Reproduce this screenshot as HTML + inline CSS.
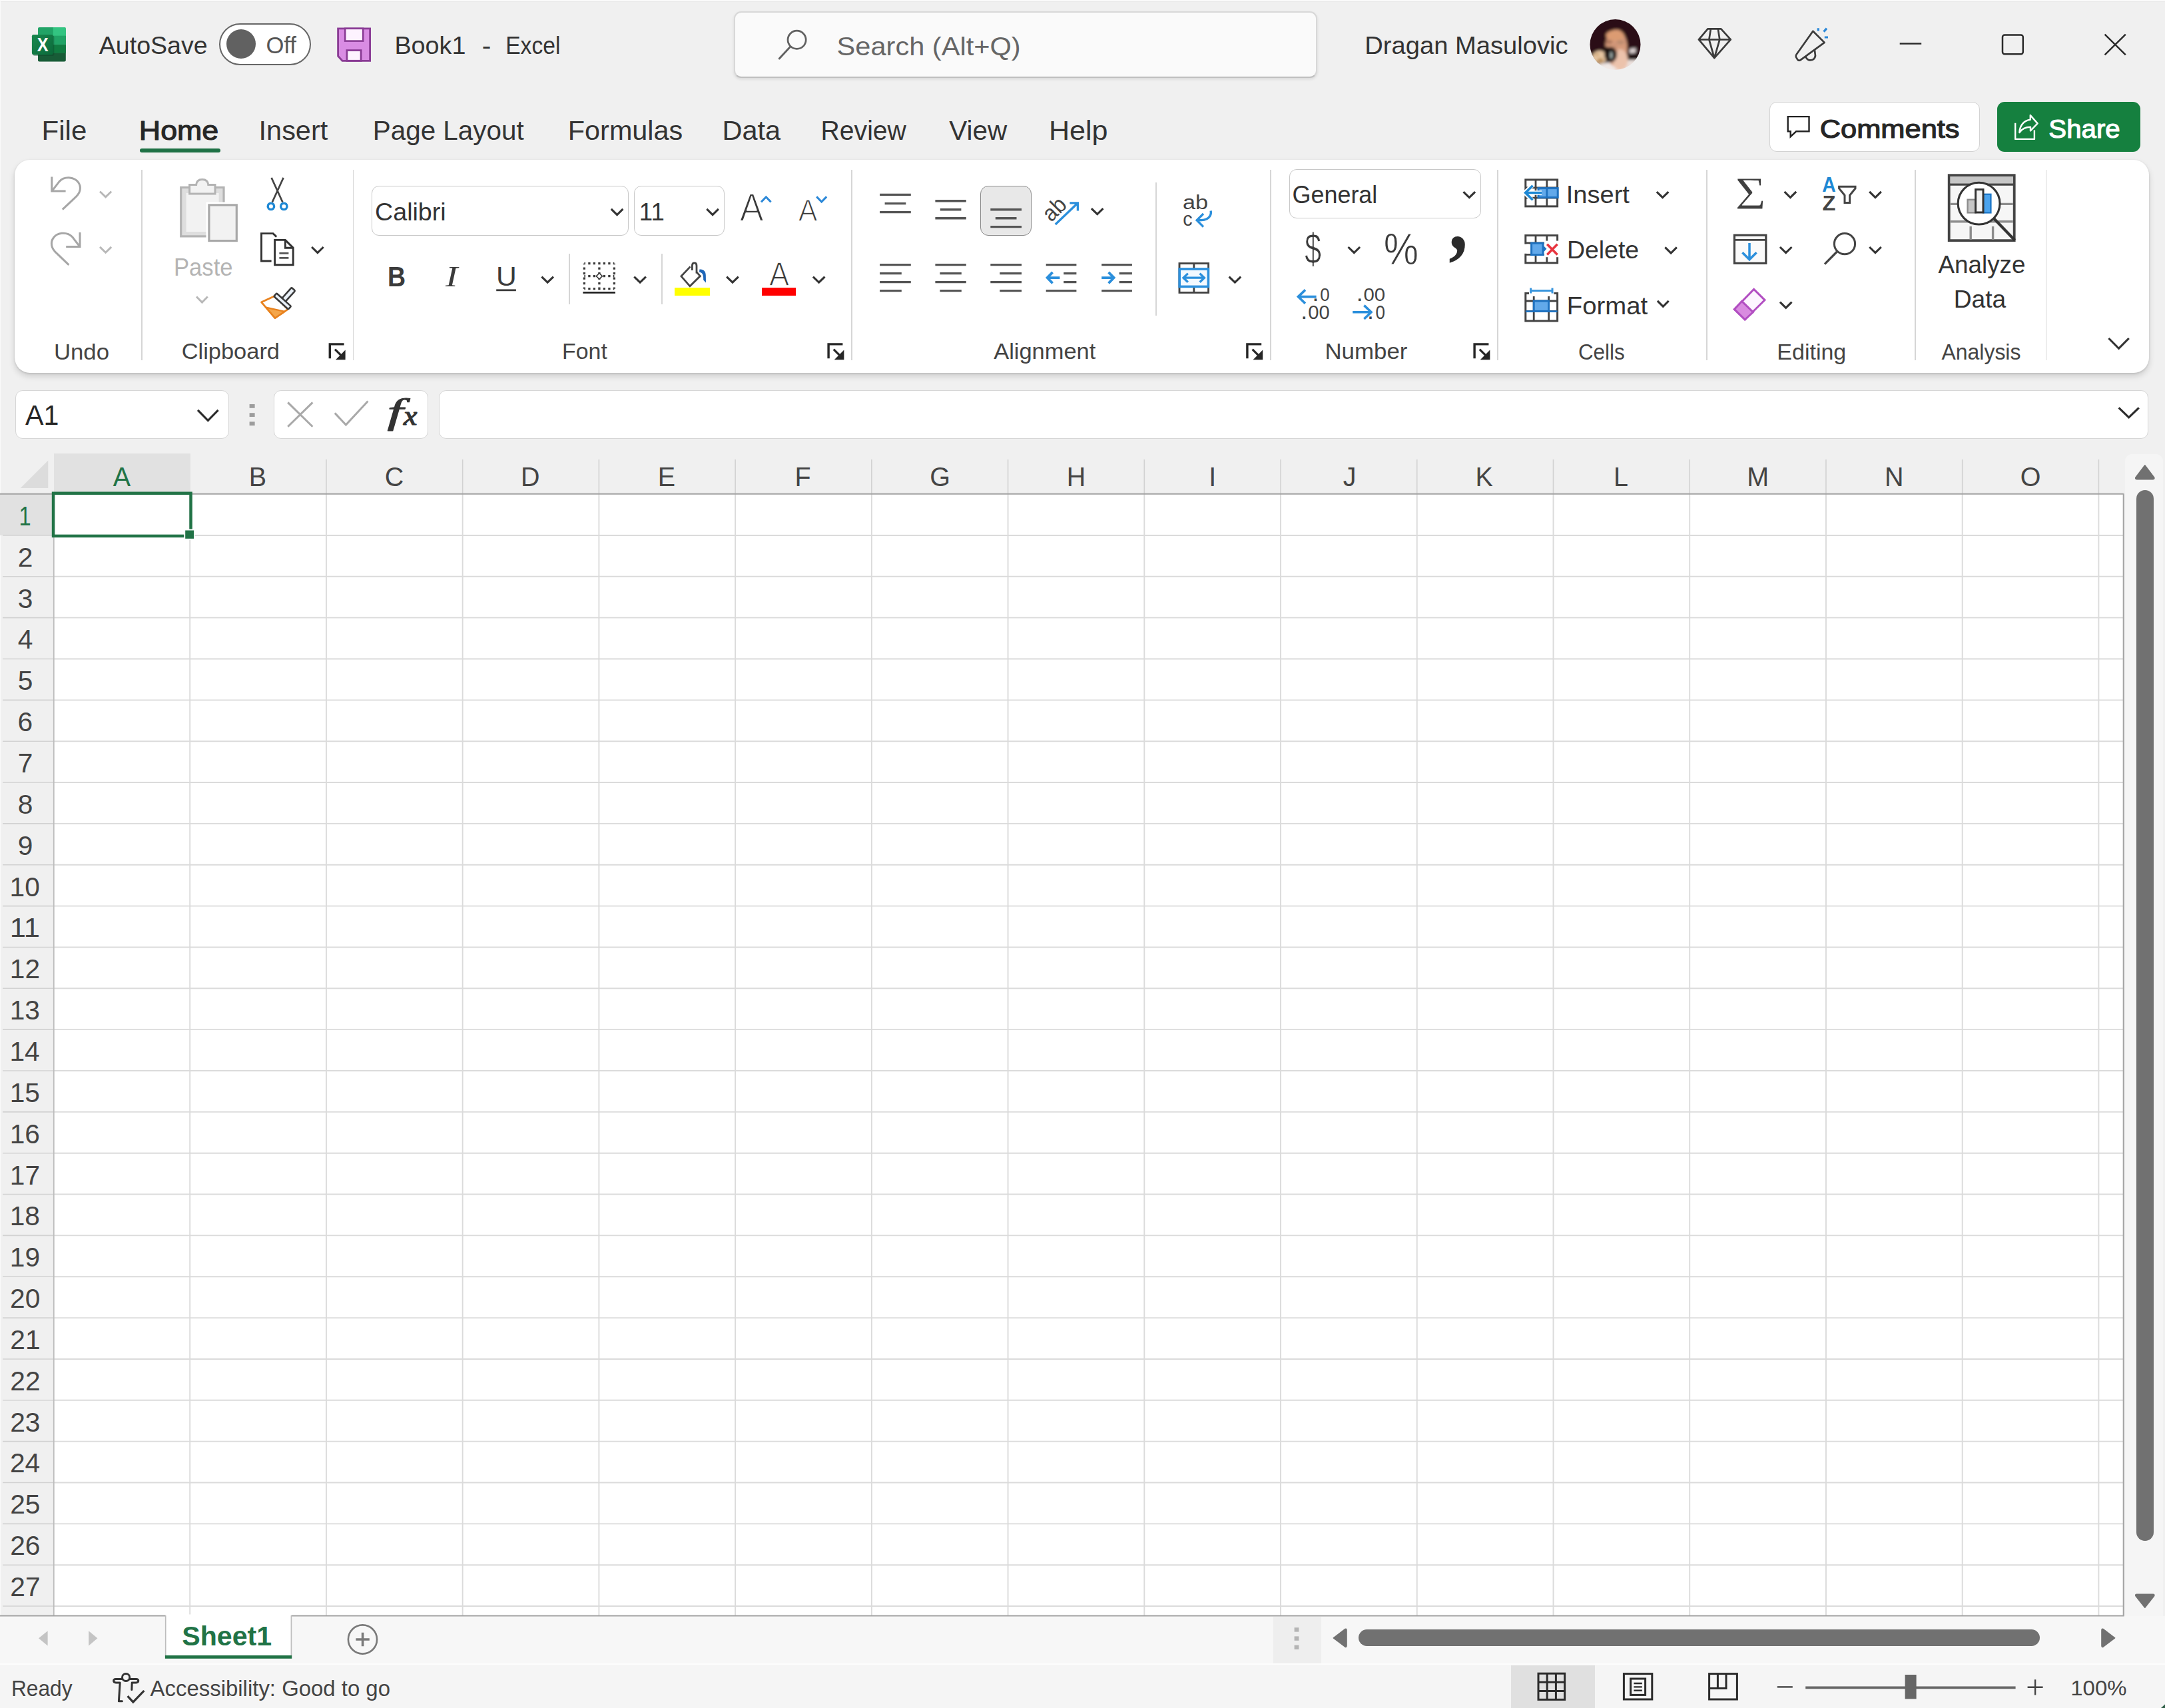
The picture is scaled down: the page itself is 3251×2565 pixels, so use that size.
<!DOCTYPE html>
<html lang="en"><head><meta charset="utf-8"><title>Book1 - Excel</title>
<style>
html,body{margin:0;padding:0;}
body{width:3251px;height:2565px;overflow:hidden;background:#f0f0f0;position:relative;font-family:'Liberation Sans',sans-serif;}
.a{position:absolute;box-sizing:border-box;}
svg.ov{position:absolute;left:0;top:0;width:3251px;height:2565px;font-family:'Liberation Sans',sans-serif;}

</style></head><body>
<div class="a" style="left:0;top:0;width:3251px;height:240px;background:#f0f0f0"></div>
<div class="a" style="left:0;top:0;width:3251px;height:1.3px;background:#fff"></div>
<div class="a" style="left:0;top:1.3px;width:3251px;height:2px;background:#ececec"></div>
<div class="a" style="left:0;top:0;width:1.2px;height:2565px;background:#fafafa"></div>
<div class="a" style="left:1102.4px;top:17.0px;width:875.6px;height:100.2px;background:#fafafa;border:2px solid #d8d8d8;border-bottom:2.4px solid #bfbfbf;border-radius:11px;box-shadow:0 2px 4px rgba(0,0,0,.10)"></div>
<div class="a" style="left:329.3px;top:35.4px;width:137.9px;height:62.6px;background:#fff;border:2.5px solid #666;border-radius:32px"></div>
<div class="a" style="left:339.7px;top:43.7px;width:44.5px;height:44.6px;background:#616161;border-radius:50%"></div>
<div class="a" style="left:210.3px;top:222.7px;width:120.9px;height:6.5px;background:#1e7145;border-radius:3.2px"></div>
<div class="a" style="left:2656.6px;top:152.7px;width:316.0px;height:75.5px;background:#fff;border:1.5px solid #d2d2d2;border-radius:11px"></div>
<div class="a" style="left:2999.1px;top:152.7px;width:215.3px;height:75.5px;background:#15803f;border-radius:11px"></div>
<div class="a" style="left:22.0px;top:240.0px;width:3205.3px;height:320.2px;background:#fff;border-radius:23px;box-shadow:0 5px 10px rgba(0,0,0,.15),0 1px 3px rgba(0,0,0,.13)"></div>
<div class="a" style="left:212.0px;top:255.0px;width:1.6px;height:285.5px;background:#d6d6d6"></div>
<div class="a" style="left:529.8px;top:255.0px;width:1.6px;height:285.5px;background:#d6d6d6"></div>
<div class="a" style="left:1278.4px;top:255.0px;width:1.6px;height:285.5px;background:#d6d6d6"></div>
<div class="a" style="left:1907.3px;top:255.0px;width:1.6px;height:285.5px;background:#d6d6d6"></div>
<div class="a" style="left:2248.4px;top:255.0px;width:1.6px;height:285.5px;background:#d6d6d6"></div>
<div class="a" style="left:2562.3px;top:255.0px;width:1.6px;height:285.5px;background:#d6d6d6"></div>
<div class="a" style="left:2875.3px;top:255.0px;width:1.6px;height:285.5px;background:#d6d6d6"></div>
<div class="a" style="left:3071.9px;top:255.0px;width:1.6px;height:285.5px;background:#d6d6d6"></div>
<div class="a" style="left:853.7px;top:381.0px;width:2.0px;height:76.0px;background:#d6d6d6"></div>
<div class="a" style="left:992.5px;top:381.0px;width:2.0px;height:76.0px;background:#d6d6d6"></div>
<div class="a" style="left:1735.0px;top:273.7px;width:2.0px;height:200.7px;background:#d6d6d6"></div>
<div class="a" style="left:557.9px;top:278.6px;width:386.1px;height:75.4px;background:#fff;border:1.5px solid #c8c8c8;border-radius:11px"></div>
<div class="a" style="left:952.4px;top:278.6px;width:135.2px;height:75.4px;background:#fff;border:1.5px solid #c8c8c8;border-radius:11px"></div>
<div class="a" style="left:1936.1px;top:253.7px;width:287.6px;height:74.8px;background:#fff;border:1.5px solid #c8c8c8;border-radius:11px"></div>
<div class="a" style="left:1472.3px;top:278.6px;width:76.6px;height:75.4px;background:#e8e8e8;border:1.5px solid #8c8c8c;border-radius:12px"></div>
<div class="a" style="left:23.3px;top:585.9px;width:320.9px;height:72.9px;background:#fff;border:1.8px solid #d6d6d6;border-radius:11px"></div>
<div class="a" style="left:411.4px;top:585.9px;width:232.1px;height:72.9px;background:#fff;border:1.8px solid #d6d6d6;border-radius:11px"></div>
<div class="a" style="left:658.5px;top:585.9px;width:2567.5px;height:73.1px;background:#fff;border:1.8px solid #d6d6d6;border-radius:11px"></div>
<div class="a" style="left:80.8px;top:741.3px;width:3107.9px;height:1685.2px;background:#fff"></div>
<div class="a" style="left:80.8px;top:681.3px;width:205.4px;height:60.0px;background:#e1e1e1"></div>
<div class="a" style="left:0.0px;top:741.3px;width:80.8px;height:62.7px;background:#e1e1e1"></div>
<div class="a" style="left:3191.0px;top:682.0px;width:57.0px;height:1746.0px;background:#f5f5f5;border-radius:10px 10px 0 0"></div>
<div class="a" style="left:3208.0px;top:736.0px;width:25.8px;height:1577.7px;background:#717171;border-radius:13px"></div>
<div class="a" style="left:0.0px;top:2426.5px;width:3251.0px;height:71.5px;background:#f7f7f7"></div>
<div class="a" style="left:1912.0px;top:2427.5px;width:72.3px;height:70.0px;background:#eeeeee"></div>
<div class="a" style="left:2039.6px;top:2446.9px;width:1023.1px;height:25.4px;background:#717171;border-radius:13px"></div>
<div class="a" style="left:0.0px;top:2498.0px;width:3251.0px;height:67.0px;background:#f5f5f5;border-top:2.4px solid #fdfdfd"></div>
<div class="a" style="left:2269.1px;top:2501.0px;width:126.3px;height:64.0px;background:#e0e0e0"></div>
<svg class="ov" viewBox="0 0 3251 2565" width="3251" height="2565">
<path d="M285.20 741.3 V2426.5 M489.93 741.3 V2426.5 M694.66 741.3 V2426.5 M899.39 741.3 V2426.5 M1104.12 741.3 V2426.5 M1308.85 741.3 V2426.5 M1513.58 741.3 V2426.5 M1718.31 741.3 V2426.5 M1923.04 741.3 V2426.5 M2127.77 741.3 V2426.5 M2332.50 741.3 V2426.5 M2537.23 741.3 V2426.5 M2741.96 741.3 V2426.5 M2946.69 741.3 V2426.5 M3151.42 741.3 V2426.5 M80.8 803.95 H3188.7 M80.8 865.80 H3188.7 M80.8 927.65 H3188.7 M80.8 989.50 H3188.7 M80.8 1051.35 H3188.7 M80.8 1113.20 H3188.7 M80.8 1175.05 H3188.7 M80.8 1236.90 H3188.7 M80.8 1298.75 H3188.7 M80.8 1360.60 H3188.7 M80.8 1422.45 H3188.7 M80.8 1484.30 H3188.7 M80.8 1546.15 H3188.7 M80.8 1608.00 H3188.7 M80.8 1669.85 H3188.7 M80.8 1731.70 H3188.7 M80.8 1793.55 H3188.7 M80.8 1855.40 H3188.7 M80.8 1917.25 H3188.7 M80.8 1979.10 H3188.7 M80.8 2040.95 H3188.7 M80.8 2102.80 H3188.7 M80.8 2164.65 H3188.7 M80.8 2226.50 H3188.7 M80.8 2288.35 H3188.7 M80.8 2350.20 H3188.7 M80.8 2412.05 H3188.7 " stroke="#dbdbdb" stroke-width="1.9" fill="none"/>
<path d="M489.93 690 V741.3 M694.66 690 V741.3 M899.39 690 V741.3 M1104.12 690 V741.3 M1308.85 690 V741.3 M1513.58 690 V741.3 M1718.31 690 V741.3 M1923.04 690 V741.3 M2127.77 690 V741.3 M2332.50 690 V741.3 M2537.23 690 V741.3 M2741.96 690 V741.3 M2946.69 690 V741.3 M3151.42 690 V741.3 M4 803.95 H80.8 M4 865.80 H80.8 M4 927.65 H80.8 M4 989.50 H80.8 M4 1051.35 H80.8 M4 1113.20 H80.8 M4 1175.05 H80.8 M4 1236.90 H80.8 M4 1298.75 H80.8 M4 1360.60 H80.8 M4 1422.45 H80.8 M4 1484.30 H80.8 M4 1546.15 H80.8 M4 1608.00 H80.8 M4 1669.85 H80.8 M4 1731.70 H80.8 M4 1793.55 H80.8 M4 1855.40 H80.8 M4 1917.25 H80.8 M4 1979.10 H80.8 M4 2040.95 H80.8 M4 2102.80 H80.8 M4 2164.65 H80.8 M4 2226.50 H80.8 M4 2288.35 H80.8 M4 2350.20 H80.8 M4 2412.05 H80.8 " stroke="#d2d2d2" stroke-width="1.6" fill="none"/>
<path d="M72.3 691.6 V732.9 H30.8 Z" fill="#dcdcdc"/>
<path d="M80.8 741.3 V2426.5" stroke="#bdbdbd" stroke-width="1.8" fill="none"/>
<path d="M0 741.6999999999999 H3188.7 M3188.7 741.3 V2426.5 M0 2426.5 H3189.6" stroke="#a3a3a3" stroke-width="2" fill="none"/>
<path d="M3188.7 2426.5 H3251" stroke="#d0d0d0" stroke-width="0" fill="none"/>
<rect x="80.05" y="740.75" width="206.5" height="64.2" fill="none" stroke="#217346" stroke-width="4.5"/>
<rect x="276.3" y="794.7" width="16" height="16" fill="#fff"/>
<rect x="278.2" y="796.5" width="12.8" height="12.4" fill="#217346"/>
<rect x="248.7" y="2424.5" width="188.7" height="64" fill="#fff"/>
<path d="M248.7 2426 V2488 M437.4 2426 V2488" stroke="#bdbdbd" stroke-width="1.6" fill="none"/>
<rect x="247.9" y="2486" width="190.3" height="4.8" fill="#217346"/>
<path d="M3251 2559.5 V2565 H3245 Z" fill="#2f5f47"/>
</svg>
<svg class="ov" viewBox="0 0 3251 2565" width="3251" height="2565">
<defs><clipPath id="xlb"><rect x="56.9" y="40.9" width="42" height="51.8" rx="2.4"/></clipPath><linearGradient id="xlg" x1="0" y1="0" x2="1" y2="1"><stop offset="0" stop-color="#18884f"/><stop offset="1" stop-color="#0b6a3a"/></linearGradient><clipPath id="avc"><circle cx="2425.5" cy="67" r="38"/></clipPath><filter id="avb" x="-10%" y="-10%" width="120%" height="120%"><feGaussianBlur stdDeviation="1.9"/></filter></defs>
<g clip-path="url(#xlb)"><rect x="56.9" y="40.9" width="42" height="13" fill="#21a366"/><rect x="79.8" y="40.9" width="19.1" height="13" fill="#33c481"/><rect x="56.9" y="53.9" width="42" height="13.4" fill="#107c41"/><rect x="79.8" y="53.9" width="19.1" height="13.4" fill="#21a366"/><rect x="56.9" y="67.3" width="42" height="12.5" fill="#185c37"/><rect x="79.8" y="67.3" width="19.1" height="12.5" fill="#107c41"/><rect x="56.9" y="79.8" width="42" height="12.9" fill="#185c37"/></g>
<rect x="49.4" y="53.6" width="32" height="30.4" rx="2.4" fill="#0a3d24" opacity=".35"/>
<rect x="47.9" y="51.9" width="31.9" height="30.3" rx="2.4" fill="url(#xlg)"/>
<text x="55.68" y="77.00" font-size="28.78" textLength="16.84" lengthAdjust="spacingAndGlyphs" fill="#ffffff" font-weight="700">X</text>
<path d="M507.6 42.8 H555.6 V91.3 H514 L507.6 84.2 Z" fill="#d98ce3" stroke="#8a3c95" stroke-width="2.8" stroke-linejoin="miter"/>
<rect x="518.2" y="42.8" width="27" height="18.8" fill="#fdf3ff" stroke="#8a3c95" stroke-width="2.6"/>
<rect x="520.9" y="75.6" width="21.2" height="15.7" fill="#fdf3ff" stroke="#8a3c95" stroke-width="2.8"/>
<circle cx="1196.6" cy="59.8" r="13.6" fill="none" stroke="#616161" stroke-width="2.7"/>
<path d="M1186.6 70.2 L1170.2 88" stroke="#616161" stroke-width="2.9" stroke-linecap="round"/>
<g clip-path="url(#avc)"><g filter="url(#avb)"><rect x="2380" y="22" width="92" height="92" fill="#2b1012"/><ellipse cx="2428" cy="110" rx="42" ry="17" fill="#f1e9e6"/><ellipse cx="2450" cy="97" rx="13" ry="11" fill="#eadfdb"/><ellipse cx="2427" cy="72" rx="16.5" ry="28" fill="#d59a7a"/><ellipse cx="2433" cy="90" rx="11.5" ry="16" fill="#ecc3ac"/><ellipse cx="2425" cy="53" rx="13.5" ry="7.5" fill="#dc9b72"/><path d="M2396 54 Q2408 28 2432 31 Q2454 33 2460 58 Q2447 45 2428 44.5 Q2410 44.5 2404 64 Z" fill="#2b1012"/><ellipse cx="2416" cy="63" rx="5.5" ry="3" fill="#a9745a"/><ellipse cx="2433.5" cy="63.5" rx="6" ry="3" fill="#b98a6e"/><path d="M2426 66 L2424 76 L2429 78" stroke="#c08a70" stroke-width="2" fill="none"/><ellipse cx="2402" cy="86" rx="11" ry="10" fill="#e6c6a2"/><ellipse cx="2403" cy="91" rx="5" ry="3.4" fill="#b88d58"/><ellipse cx="2398" cy="82" rx="3" ry="2" fill="#c9a06c"/><ellipse cx="2418.5" cy="82" rx="9.5" ry="11.5" fill="#171011"/><ellipse cx="2412" cy="74" rx="5" ry="4" fill="#171011"/><ellipse cx="2419.5" cy="83" rx="1.3" ry="5.5" fill="#c9dcd8"/><path d="M2447 73.5 L2456.5 72 L2456 79.5 L2447 80 Z" fill="#ddd3d3"/><path d="M2444 81 H2463 V90 H2444 Z" fill="#1a0b0d"/></g></g>
<path d="M2564.4 43.4 H2584.3 L2598.8 59.4 L2574.3 87.2 L2550.9 59.4 Z M2550.9 59.4 H2598.8 M2568.9 43.4 L2566.4 59.4 L2574.3 87.2 L2582.3 59.4 L2579.8 43.4" fill="none" stroke="#3b3b3b" stroke-width="2.7" stroke-linejoin="round" stroke-linecap="round"/>
<path d="M2722.4 46.8 L2739.6 63.9 L2703 90.6 Q2700.6 91.6 2699.3 89.6 L2696.8 85.4 Q2696.2 83.6 2697.4 82 Z" fill="none" stroke="#3b3b3b" stroke-width="2.7" stroke-linejoin="round" stroke-linecap="round"/>
<path d="M2711.5 85.4 A7.2 7.2 0 0 0 2725.6 80.6 L2725 75.6" fill="none" stroke="#3b3b3b" stroke-width="2.7" stroke-linejoin="round" stroke-linecap="round"/>
<path d="M2730.3 42.2 V46.6 M2743 42.6 L2738.6 47.6 M2739.8 56 H2745" stroke="#2b88d8" stroke-width="3.2" fill="none"/>
<path d="M2852.7 65.4 H2885.2" fill="none" stroke="#2b2b2b" stroke-width="2.5"/>
<rect x="3007" y="52.4" width="30.8" height="28.8" rx="3.2" fill="none" stroke="#2b2b2b" stroke-width="2.5"/>
<path d="M3160.6 51.6 L3191.8 82.4 M3191.8 51.6 L3160.6 82.4" fill="none" stroke="#2b2b2b" stroke-width="2.5"/>
<path d="M2684.7 175.1 H2716.5 V197.3 H2697.2 L2688.7 205.2 V197.3 H2684.7 Z" fill="none" stroke="#222" stroke-width="2.4" stroke-linejoin="miter"/>
<path d="M3026.2 184.8 V208.9 H3054.9 V195.4" fill="none" stroke="#fff" stroke-width="2.4" stroke-linejoin="round"/>
<path d="M3048.8 173 L3059.6 185.4 L3049 196.4 V190.8 C3041 190.8 3036.4 193 3032.4 199 C3033 188.2 3039.4 180.6 3048.8 179.8 Z" fill="none" stroke="#fff" stroke-width="2.4" stroke-linejoin="round"/>
<path d="M77.8 265.5 V287 H98.6" fill="none" stroke="#a6a6a6" stroke-width="3" stroke-linejoin="miter"/>
<path d="M78.6 286.2 L89 272.6 C93.5 267.8 99.5 266.4 105 266.9 C116 268 121.6 277 120.2 285 C119.2 290.6 116 294 112.4 297.2 L93.8 314.6" fill="none" stroke="#a6a6a6" stroke-width="3" stroke-linejoin="miter"/>
<path d="M120 348.9 V370.4 H99.2" fill="none" stroke="#a6a6a6" stroke-width="3" stroke-linejoin="miter"/>
<path d="M119.2 369.6 L108.8 356 C104.3 351.2 98.3 349.8 92.8 350.3 C81.8 351.4 76.2 360.4 77.6 368.4 C78.6 374 81.8 377.4 85.4 380.6 L103.4 397.8" fill="none" stroke="#a6a6a6" stroke-width="3" stroke-linejoin="miter"/>
<path d="M150.0 287.5 L158.6 295.9 L167.2 287.5" fill="none" stroke="#b8b8b8" stroke-width="2.9" stroke-linejoin="miter"/>
<path d="M150.0 370.9 L158.6 379.3 L167.2 370.9" fill="none" stroke="#b8b8b8" stroke-width="2.9" stroke-linejoin="miter"/>
<rect x="271.7" y="281.5" width="64.3" height="73.4" fill="#dedede" stroke="#b3b3b3" stroke-width="3.2"/>
<rect x="279.6" y="290" width="49" height="58" fill="#f2f2f2"/>
<path d="M284.6 291 V277.6 H294.6 C295 271.6 299 269.4 303.6 269.4 C308.2 269.4 312.4 271.6 312.8 277.6 H323 V291 Z" fill="#f2f2f2" stroke="#b3b3b3" stroke-width="3"/>
<rect x="309.5" y="303.5" width="50" height="62" fill="#fff"/>
<rect x="313.9" y="307.9" width="41.4" height="53.7" fill="#f2f2f2" stroke="#a8a8a8" stroke-width="3.2"/>
<path d="M295.0 445.5 L303.4 454.1 L311.8 445.5" fill="none" stroke="#b8b8b8" stroke-width="2.9" stroke-linejoin="miter"/>
<path d="M407.6 266.9 L424.4 303.6 M425.6 266.9 L408.8 303.6" stroke="#444" stroke-width="2.6" fill="none"/>
<circle cx="406.9" cy="309.9" r="4.7" fill="#fff" stroke="#1e88d4" stroke-width="3.4"/>
<circle cx="426.3" cy="309.9" r="4.7" fill="#fff" stroke="#1e88d4" stroke-width="3.4"/>
<path d="M407.6 392 H392.5 V350.6 H410 L415.2 355.6" fill="none" stroke="#333" stroke-width="2.9" stroke-linejoin="miter"/>
<path d="M412.6 360.4 H428.4 L440.2 372.2 V397.8 H412.6 Z" fill="#fff" stroke="#333" stroke-width="2.9"/>
<path d="M428.4 360.4 V372.2 H440.2" fill="none" stroke="#333" stroke-width="2.9" stroke-linejoin="miter"/>
<path d="M419.4 380.4 H433.4 M419.4 387.4 H433.4" stroke="#555" stroke-width="2.6"/>
<path d="M468.1 371.0 L476.9 379.6 L485.7 371.0" fill="none" stroke="#333" stroke-width="3.1" stroke-linejoin="miter"/>
<path d="M412.6 444.6 L392.6 453.8 L413 477.6 L432.4 464.4 Z" fill="#fff" stroke="#e8821e" stroke-width="2.8" stroke-linejoin="round"/>
<path d="M399.4 461.6 L413 477.6 L427.6 467.8 Z" fill="#f4a64a" stroke="#e8821e" stroke-width="2.4" stroke-linejoin="round"/>
<g transform="rotate(42 424.2 452.4)"><rect x="420.6" y="428" width="7.2" height="22" rx="1.8" fill="#eaf1f8" stroke="#3a3a3a" stroke-width="2.6"/><rect x="409.6" y="449.4" width="29.2" height="6.2" rx="1.6" fill="#eaf1f8" stroke="#3a3a3a" stroke-width="2.6"/></g>
<path d="M495.3 538.2 V516.9000000000001 H516.6" fill="none" stroke="#262626" stroke-width="3.4"/><path d="M503.0 524.6 L514.6 536.2" fill="none" stroke="#262626" stroke-width="3.2"/><path d="M518.6 525.6 V540.2 H504.0 Z" fill="#262626"/>
<path d="M1244.1000000000001 538.2 V516.9000000000001 H1265.4" fill="none" stroke="#262626" stroke-width="3.4"/><path d="M1251.8000000000002 524.6 L1263.4 536.2" fill="none" stroke="#262626" stroke-width="3.2"/><path d="M1267.4 525.6 V540.2 H1252.8000000000002 Z" fill="#262626"/>
<path d="M1872.9 538.2 V516.9000000000001 H1894.2" fill="none" stroke="#262626" stroke-width="3.4"/><path d="M1880.6000000000001 524.6 L1892.2 536.2" fill="none" stroke="#262626" stroke-width="3.2"/><path d="M1896.2 525.6 V540.2 H1881.6000000000001 Z" fill="#262626"/>
<path d="M2214.1 538.2 V516.9000000000001 H2235.4" fill="none" stroke="#262626" stroke-width="3.4"/><path d="M2221.8 524.6 L2233.4 536.2" fill="none" stroke="#262626" stroke-width="3.2"/><path d="M2237.4 525.6 V540.2 H2222.8 Z" fill="#262626"/>
<path d="M917.8 313.9 L926.6 322.5 L935.4 313.9" fill="none" stroke="#333" stroke-width="3.1" stroke-linejoin="miter"/>
<path d="M1061.3 313.9 L1070.1 322.5 L1078.9 313.9" fill="none" stroke="#333" stroke-width="3.1" stroke-linejoin="miter"/>
<path d="M1143 303.4 L1150.3 295.8 L1157.6 303.4" fill="none" stroke="#2b88d8" stroke-width="3"/>
<path d="M1226.2 295.4 L1233.7 303 L1241.2 295.4" fill="none" stroke="#2b88d8" stroke-width="3"/>
<path d="M745.2 435.8 H774.9" stroke="#3b3b3b" stroke-width="2.8"/>
<path d="M813.4 415.6 L822.2 424.2 L831.0 415.6" fill="none" stroke="#333" stroke-width="3.1" stroke-linejoin="miter"/>
<path d="M877.4 395.7 H922.4 M877.4 433.7 H922.4 M877.4 414.7 H922.4 M877.4 395.7 V433.7 M922.4 395.7 V433.7 M899.9 395.7 V433.7" fill="none" stroke="#3a3a3a" stroke-width="3.3" stroke-dasharray="3.3 4.2" stroke-dashoffset="1.65"/>
<rect x="896.7" y="411.5" width="6.4" height="6.4" fill="#fff" stroke="#3a3a3a" stroke-width="1.6" transform="rotate(45 899.9 414.7)"/>
<path d="M875.4 439.3 H924" stroke="#222" stroke-width="2.8"/>
<path d="M952.3 415.6 L961.1 424.2 L969.9 415.6" fill="none" stroke="#333" stroke-width="3.1" stroke-linejoin="miter"/>
<path d="M1036.6 400.4 L1022.9 414.9 L1036 429.8 L1051.4 414.6 L1046 408.6" fill="none" stroke="#444" stroke-width="2.8" stroke-linejoin="miter"/>
<path d="M1039.4 406 V399 C1039.4 393.6 1046 393.6 1046 399 V410.6" fill="none" stroke="#444" stroke-width="2.8"/>
<path d="M1050.4 404.6 C1056.6 403.8 1059.6 407.6 1059.8 413 L1060 424.4 L1056.2 420.6 C1056.4 412.8 1055.2 409.4 1050 408.4 Z" fill="#1f66b8"/>
<rect x="1013" y="432" width="53" height="12" fill="#ffff00"/>
<path d="M1091.2 415.6 L1100.0 424.2 L1108.8 415.6" fill="none" stroke="#333" stroke-width="3.1" stroke-linejoin="miter"/>
<rect x="1144" y="432" width="51" height="12" fill="#ff0000"/>
<path d="M1220.9 415.6 L1229.7 424.2 L1238.5 415.6" fill="none" stroke="#333" stroke-width="3.1" stroke-linejoin="miter"/>
<path d="M1321.1 292.4 H1367.8 M1328.6 305.6 H1360.3 M1321.1 318.6 H1367.8 " stroke="#555" stroke-width="3.4" fill="none"/>
<path d="M1404.4 301.8 H1450.8 M1411.8 314.8 H1443.4 M1404.4 327.8 H1450.8 " stroke="#555" stroke-width="3.4" fill="none"/>
<path d="M1487.3 314.8 H1534.0 M1494.8 327.8 H1526.5 M1487.3 340.6 H1534.0 " stroke="#555" stroke-width="3.4" fill="none"/>
<path d="M1321.1 397.6 H1367.8 M1321.1 410.6 H1353.8 M1321.1 423.6 H1367.8 M1321.1 436.6 H1353.8 " stroke="#555" stroke-width="3.4" fill="none"/>
<path d="M1404.4 397.6 H1450.8 M1411.4 410.6 H1443.8 M1404.4 423.6 H1450.8 M1411.4 436.6 H1443.8 " stroke="#555" stroke-width="3.4" fill="none"/>
<path d="M1487.3 397.6 H1534.0 M1501.3 410.6 H1534.0 M1487.3 423.6 H1534.0 M1501.3 436.6 H1534.0 " stroke="#555" stroke-width="3.4" fill="none"/>
<path d="M1570.7 397.6 H1616.4 M1597.2 410.6 H1616.4 M1597.2 423.6 H1616.4 M1570.7 436.6 H1616.4 " stroke="#555" stroke-width="3.4" fill="none"/>
<path d="M1591.4 417.1 H1573 M1580.6 408.9 L1572.6 417.1 L1580.6 425.3" fill="none" stroke="#2b8fdc" stroke-width="3.8"/>
<path d="M1654.2 397.6 H1699.9 M1680.7 410.6 H1699.9 M1680.7 423.6 H1699.9 M1654.2 436.6 H1699.9 " stroke="#555" stroke-width="3.4" fill="none"/>
<path d="M1654.2 417.1 H1672.2 M1664.6 408.9 L1672.6 417.1 L1664.6 425.3" fill="none" stroke="#2b8fdc" stroke-width="3.8"/>
<text transform="translate(1578.6 334.6) rotate(-45)" font-size="34" textLength="35.5" lengthAdjust="spacingAndGlyphs" fill="#444">ab</text>
<path d="M1584.8 337 L1618 305.2 M1606.4 304.9 H1618.4 V316.6" fill="none" stroke="#2b8fdc" stroke-width="3.3"/>
<path d="M1638.9 313.1 L1647.7 321.7 L1656.5 313.1" fill="none" stroke="#333" stroke-width="3.1" stroke-linejoin="miter"/>
<text x="1775.95" y="314.30" font-size="29.55" textLength="38.09" lengthAdjust="spacingAndGlyphs" fill="#444">ab</text>
<text x="1776.18" y="338.80" font-size="29.55" textLength="14.38" lengthAdjust="spacingAndGlyphs" fill="#444">c</text>
<path d="M1818.2 316.6 C1819.6 326 1813 331 1798.6 330.8" fill="none" stroke="#2b8fdc" stroke-width="3.4"/>
<path d="M1807 321 L1797.2 330.8 L1807 340.6" fill="none" stroke="#2b8fdc" stroke-width="3.4"/>
<rect x="1771" y="395.6" width="43.6" height="43.8" fill="#fff" stroke="#444" stroke-width="2.9"/>
<path d="M1792.8 395.6 V439.4" stroke="#444" stroke-width="2.9"/>
<rect x="1771.2" y="404" width="43.2" height="26.4" fill="#f3f9ff" stroke="#2b8fdc" stroke-width="3.6"/>
<path d="M1777.4 417.2 H1808 M1783.8 410.6 L1777 417.2 L1783.8 423.8 M1801.6 410.6 L1808.4 417.2 L1801.6 423.8" fill="none" stroke="#2b8fdc" stroke-width="3.3"/>
<path d="M1845.6 415.6 L1854.4 424.2 L1863.2 415.6" fill="none" stroke="#333" stroke-width="3.1" stroke-linejoin="miter"/>
<path d="M2197.5 288.1 L2206.3 296.7 L2215.1 288.1" fill="none" stroke="#333" stroke-width="3.1" stroke-linejoin="miter"/>
<path d="M2024.5 371.0 L2033.3 379.6 L2042.1 371.0" fill="none" stroke="#333" stroke-width="3.1" stroke-linejoin="miter"/>
<text transform="translate(1959.01 395.53) scale(0.4515 0.6448)" font-size="100" fill="#3a3a3a" stroke="#fff" stroke-width="1.64" stroke-linejoin="round">$</text>
<text transform="translate(2077.70 397.41) scale(0.5881 0.6717)" font-size="100" fill="#3a3a3a" stroke="#fff" stroke-width="1.43" stroke-linejoin="round">%</text>
<text transform="translate(2175.27 374.49) scale(1.1573 1.3123)" font-size="100" fill="#2b2b2b" font-weight="700" font-family="'Liberation Serif',serif">,</text>
<path d="M1976.6 445.6 H1949.6 M1960 435.4 L1949.4 445.6 L1960 455.8" fill="none" stroke="#2b8fdc" stroke-width="3.6"/>
<text transform="translate(1982.19 451.73) scale(0.2594 0.2740)" font-size="100" fill="#444">0</text>
<text transform="translate(1970.54 452.00) scale(0.3571 0.3367)" font-size="100" fill="#444">.</text>
<text transform="translate(1964.26 478.92) scale(0.2920 0.2910)" font-size="100" fill="#444">00</text>
<text transform="translate(1953.34 479.20) scale(0.3571 0.3367)" font-size="100" fill="#444">.</text>
<text transform="translate(2047.45 451.73) scale(0.2940 0.2740)" font-size="100" fill="#444">00</text>
<text transform="translate(2036.74 452.00) scale(0.3571 0.3367)" font-size="100" fill="#444">.</text>
<path d="M2031.2 468.8 H2058.6 M2048.4 458.6 L2059 468.8 L2048.4 479" fill="none" stroke="#2b8fdc" stroke-width="3.6"/>
<text transform="translate(2065.59 478.92) scale(0.2594 0.2910)" font-size="100" fill="#444">0</text>
<text transform="translate(2052.94 479.20) scale(0.3571 0.3367)" font-size="100" fill="#444">.</text>
<rect x="2290.8" y="269.9" width="47.8" height="40" fill="#fff" stroke="#444" stroke-width="3"/>
<path d="M2306 269.9 V309.9 M2322.8 269.9 V309.9 M2290.8 281.8 H2338.6 M2290.8 297.2 H2338.6" fill="none" stroke="#444" stroke-width="2.8"/>
<rect x="2310" y="282.6" width="29.2" height="14" fill="#62a9ea" stroke="#1f72c0" stroke-width="3"/>
<path d="M2322.8 282.6 V296.6" stroke="#1f72c0" stroke-width="2.8"/>
<path d="M2315 289.5 H2289.4 M2301.6 277.8 L2289.8 289.5 L2301.6 301.2" fill="none" stroke="#fff" stroke-width="6.4"/>
<path d="M2315 289.5 H2290.6 M2301.6 278.8 L2290.6 289.5 L2301.6 300.2" fill="none" stroke="#1e88d4" stroke-width="3.6"/>
<path d="M2487.8 288.1 L2496.6 296.7 L2505.4 288.1" fill="none" stroke="#333" stroke-width="3.1" stroke-linejoin="miter"/>
<rect x="2290.8" y="353.6" width="47.8" height="41.2" fill="#fff" stroke="#444" stroke-width="3"/>
<path d="M2306 353.6 V394.8 M2322.8 353.6 V394.8 M2290.8 365 H2338.6 M2290.8 382.4 H2338.6" fill="none" stroke="#444" stroke-width="2.8"/>
<rect x="2318.8" y="361.6" width="24" height="24.6" fill="#fff"/>
<rect x="2286" y="366.6" width="10" height="14.2" fill="#fff"/>
<path d="M2317.4 368.6 L2322.4 373.8 L2317.4 379 Z" fill="#1f72c0"/>
<rect x="2299.6" y="365.2" width="17.4" height="17.4" fill="#62a9ea" stroke="#1f72c0" stroke-width="3"/>
<path d="M2323.2 366.8 L2338.6 382.4 M2338.6 366.8 L2323.2 382.4" fill="none" stroke="#e8353f" stroke-width="3.5"/>
<path d="M2500.3 371.4 L2509.1 380.0 L2517.9 371.4" fill="none" stroke="#333" stroke-width="3.1" stroke-linejoin="miter"/>
<path d="M2296 440.6 H2290.8 V482 H2338.6 V440.6 H2333.4" fill="#fff" stroke="#444" stroke-width="3"/>
<path d="M2303.2 445 V482 M2325.6 445 V482 M2290.8 452 H2338.6 M2290.8 467.4 H2338.6" fill="none" stroke="#444" stroke-width="2.8"/>
<rect x="2303.2" y="452" width="22.4" height="15.4" fill="#62a9ea" stroke="#1f72c0" stroke-width="3"/>
<path d="M2290.8 467.6 H2338.6" stroke="#1f72c0" stroke-width="2.6"/>
<path d="M2298.4 436.4 H2331.2 M2298.6 432.4 V440.6 M2331 432.4 V440.6" fill="none" stroke="#3a96dd" stroke-width="3"/>
<path d="M2488.9 451.8 L2497.3 460.4 L2505.7 451.8" fill="none" stroke="#333" stroke-width="3.1" stroke-linejoin="miter"/>
<text transform="translate(2605.51 313.60) scale(0.7916 0.7025)" font-size="100" fill="#404040" font-family="'Liberation Serif',serif" stroke="#fff" stroke-width="1.07" stroke-linejoin="round">Σ</text>
<path d="M2679.6 287.9 L2688.4 296.5 L2697.2 287.9" fill="none" stroke="#333" stroke-width="3.1" stroke-linejoin="miter"/>
<text x="2736.29" y="288.00" font-size="31.40" textLength="20.45" lengthAdjust="spacingAndGlyphs" fill="#1e88d4" font-weight="700">A</text>
<text x="2736.63" y="316.00" font-size="30.81" textLength="19.91" lengthAdjust="spacingAndGlyphs" fill="#444" font-weight="700">Z</text>
<path d="M2761.6 280.2 H2786 V283 L2777.6 293.4 V304.4 H2770 V293.4 L2761.6 283 Z" fill="#fff" stroke="#444" stroke-width="3" stroke-linejoin="miter"/>
<path d="M2807.2 287.9 L2816.0 296.5 L2824.8 287.9" fill="none" stroke="#333" stroke-width="3.1" stroke-linejoin="miter"/>
<rect x="2604.4" y="353.2" width="47.4" height="42.2" fill="#fafafa" stroke="#444" stroke-width="3.2"/>
<path d="M2604.4 360.4 H2651.8" stroke="#444" stroke-width="2.8"/>
<path d="M2627 365 V389.4 M2616.4 379.2 L2627 389.8 L2637.6 379.2" fill="none" stroke="#2b8fdc" stroke-width="3.5"/>
<path d="M2672.9 371.0 L2681.7 379.6 L2690.5 371.0" fill="none" stroke="#333" stroke-width="3.1" stroke-linejoin="miter"/>
<circle cx="2770" cy="366.2" r="15.6" fill="none" stroke="#444" stroke-width="3"/>
<path d="M2758.4 378 L2740 396.6" stroke="#444" stroke-width="3.3"/>
<path d="M2807.2 371.0 L2816.0 379.6 L2824.8 371.0" fill="none" stroke="#333" stroke-width="3.1" stroke-linejoin="miter"/>
<path d="M2633.6 434.4 L2650 450.6 L2620.2 480 L2604.4 464.4 Z" fill="#fdf5ff" stroke="#b24fc2" stroke-width="3" stroke-linejoin="miter"/>
<path d="M2615.6 452.4 L2632.4 468.8 L2620.2 480 L2604.4 464.4 Z" fill="#d98ce0" stroke="#b24fc2" stroke-width="3" stroke-linejoin="miter"/>
<path d="M2672.9 453.7 L2681.7 462.3 L2690.5 453.7" fill="none" stroke="#333" stroke-width="3.1" stroke-linejoin="miter"/>
<rect x="2926.7" y="263.2" width="98" height="98" fill="#f6f6f6" stroke="#444" stroke-width="3.8"/>
<rect x="2928.6" y="265" width="94.2" height="10.6" fill="#c6c6c6"/>
<path d="M2926.7 277.2 H3024.7" stroke="#444" stroke-width="3.2"/>
<path d="M2928.6 306.4 H3022.8 M2928.6 332.8 H3022.8 M2959.2 340 V360 M2992.6 340 V360" stroke="#8c8c8c" stroke-width="3.4" fill="none"/>
<circle cx="2971.6" cy="305.6" r="31.4" fill="#fff" stroke="#333" stroke-width="3.1"/>
<path d="M2994.2 328.2 L3025.4 360.8" stroke="#333" stroke-width="4.2"/>
<rect x="2954.6" y="299.8" width="12" height="19.6" fill="#c6c6c6" stroke="#8c8c8c" stroke-width="2.4"/>
<rect x="2978" y="291.8" width="11.4" height="27.6" fill="#4aa3ee" stroke="#1e78c8" stroke-width="2.4"/>
<rect x="2966.6" y="284.6" width="11.4" height="34.4" fill="#f2f2f2" stroke="#333" stroke-width="3"/>
<path d="M3166.4 508.0 L3181.6 523.4 L3196.8 508.0" fill="none" stroke="#333" stroke-width="3.1" stroke-linejoin="miter"/>
<path d="M297.0 615.9 L312.3 631.5 L327.6 615.9" fill="none" stroke="#2b2b2b" stroke-width="3.1" stroke-linejoin="miter"/>
<path d="M3181.6 612.3 L3196.7 626.9 L3211.8 612.3" fill="none" stroke="#2b2b2b" stroke-width="3.1" stroke-linejoin="miter"/>
<rect x="374.6" y="607" width="8" height="5.8" fill="#9c9c9c"/>
<rect x="374.6" y="620.2" width="8" height="5.8" fill="#9c9c9c"/>
<rect x="374.6" y="633.3" width="8" height="5.8" fill="#9c9c9c"/>
<path d="M432.2 604.4 L469.4 640.8 M469.4 604.4 L432.2 640.8" fill="none" stroke="#a9a9a9" stroke-width="3"/>
<path d="M502.8 620.4 L519.4 638 L552.4 602.4" fill="none" stroke="#a9a9a9" stroke-width="3"/>
<text transform="translate(581.42 635.78) scale(0.8695 0.5365)" font-size="100" fill="#333" font-style="italic" font-family="'Liberation Serif',serif" stroke="#333" stroke-width="1.85" stroke-linejoin="round">f</text>
<text transform="translate(605.96 637.60) scale(0.4591 0.4096)" font-size="100" fill="#333" font-style="italic" font-family="'Liberation Serif',serif" stroke="#333" stroke-width="2.99" stroke-linejoin="round">x</text>
<path d="M3220.8 699 L3234.4 717 Q3235.4 719.2 3233 719.4 H3208.6 Q3206.2 719.2 3207.2 717 Z" fill="#717171" stroke="#717171" stroke-width="2" stroke-linejoin="round"/>
<path d="M3220.8 2414 L3234.4 2396.6 Q3235.4 2394.6 3233 2394.4 H3208.6 Q3206.2 2394.6 3207.2 2396.6 Z" fill="#717171" stroke="#717171" stroke-width="2" stroke-linejoin="round"/>
<path d="M2002.4 2459.8 L2020 2446.4 Q2022 2445.6 2022 2448 V2471.6 Q2022 2474 2020 2473.2 Z" fill="#717171" stroke="#717171" stroke-width="1.6" stroke-linejoin="round"/>
<path d="M3175.6 2459.8 L3158 2446.4 Q3156 2445.6 3156 2448 V2471.6 Q3156 2474 3158 2473.2 Z" fill="#717171" stroke="#717171" stroke-width="1.6" stroke-linejoin="round"/>
<rect x="1943.6" y="2444.2" width="6.8" height="6.4" fill="#b4b4b4"/>
<rect x="1943.6" y="2457.4" width="6.8" height="6.4" fill="#b4b4b4"/>
<rect x="1943.6" y="2470.6" width="6.8" height="6.4" fill="#b4b4b4"/>
<path d="M58 2460.2 L71.6 2449.2 V2471.4 Z" fill="#c4c4c4"/>
<path d="M146.4 2460.2 L133.2 2449.2 V2471.4 Z" fill="#c4c4c4"/>
<circle cx="544.5" cy="2462" r="21.6" fill="none" stroke="#7a7a7a" stroke-width="2.6"/>
<path d="M534.4 2462 H554.8 M544.6 2451.8 V2472.2" stroke="#7a7a7a" stroke-width="3.6" fill="none"/>
<circle cx="189.1" cy="2519" r="5.6" fill="none" stroke="#333" stroke-width="3" stroke-linejoin="round" stroke-linecap="round"/>
<path d="M182.6 2521.6 H174 Q170.6 2521.8 170.6 2524.2 Q170.8 2526.8 174 2527 H180.2 L178.4 2554.8 H183.4" fill="none" stroke="#333" stroke-width="3" stroke-linejoin="round" stroke-linecap="round"/>
<path d="M195.6 2521.6 H204.4 Q207.8 2521.8 207.8 2524.2 Q207.6 2526.8 204.4 2527 H198.2 L197.8 2537.6" fill="none" stroke="#333" stroke-width="3" stroke-linejoin="round" stroke-linecap="round"/>
<path d="M191.6 2547.2 L199.9 2556.2 L216.4 2539" fill="none" stroke="#333" stroke-width="3.2"/>
<rect x="2310" y="2513.2" width="39.6" height="39.2" fill="none" stroke="#2b2b2b" stroke-width="3"/>
<path d="M2323.2 2513.2 V2552.4 M2336.4 2513.2 V2552.4 M2310 2526.2 H2349.6 M2310 2539.4 H2349.6" fill="none" stroke="#2b2b2b" stroke-width="3"/>
<rect x="2438.4" y="2513.6" width="42.4" height="38.4" fill="none" stroke="#2b2b2b" stroke-width="3"/>
<rect x="2448.6" y="2521" width="22" height="24.4" fill="none" stroke="#2b2b2b" stroke-width="3"/>
<path d="M2453.4 2528 H2465.8 M2453.4 2533.4 H2465.8 M2453.4 2538.8 H2465.8" stroke="#2b2b2b" stroke-width="2.4" fill="none"/>
<rect x="2566.6" y="2513.6" width="41.8" height="38.4" fill="none" stroke="#2b2b2b" stroke-width="3"/>
<path d="M2566.6 2535.4 H2592 V2513.6 M2579.4 2513.6 V2535.4" fill="none" stroke="#2b2b2b" stroke-width="3"/>
<path d="M2668.8 2533.4 H2691.8" stroke="#444" stroke-width="2.4"/>
<path d="M2711.2 2534.4 H3026.6" stroke="#666" stroke-width="3.6"/>
<rect x="2860.6" y="2515" width="17" height="36.4" fill="#666"/>
<path d="M3044.6 2533.8 H3067.6 M3056.1 2522.2 V2545.6" stroke="#444" stroke-width="2.4" fill="none"/>
<text x="148.83" y="81.30" font-size="37.79" textLength="162.84" lengthAdjust="spacingAndGlyphs" fill="#333333">AutoSave</text>
<text x="399.38" y="79.60" font-size="35.18" textLength="45.57" lengthAdjust="spacingAndGlyphs" fill="#555">Off</text>
<text x="592.40" y="81.30" font-size="37.79" textLength="107.04" lengthAdjust="spacingAndGlyphs" fill="#333333">Book1</text>
<text x="723.88" y="81.30" font-size="37.79" textLength="13.64" lengthAdjust="spacingAndGlyphs" fill="#333333">-</text>
<text x="759.14" y="81.30" font-size="37.79" textLength="82.31" lengthAdjust="spacingAndGlyphs" fill="#333333">Excel</text>
<text x="1256.61" y="82.50" font-size="39.68" textLength="276.07" lengthAdjust="spacingAndGlyphs" fill="#666">Search (Alt+Q)</text>
<text x="2049.27" y="81.30" font-size="37.79" textLength="305.23" lengthAdjust="spacingAndGlyphs" fill="#333333">Dragan Masulovic</text>
<text x="62.55" y="209.50" font-size="40.70" textLength="67.82" lengthAdjust="spacingAndGlyphs" fill="#333333">File</text>
<text x="388.58" y="209.50" font-size="40.70" textLength="103.63" lengthAdjust="spacingAndGlyphs" fill="#333333">Insert</text>
<text x="559.79" y="209.50" font-size="40.70" textLength="226.91" lengthAdjust="spacingAndGlyphs" fill="#333333">Page Layout</text>
<text x="852.80" y="209.50" font-size="40.70" textLength="172.49" lengthAdjust="spacingAndGlyphs" fill="#333333">Formulas</text>
<text x="1084.49" y="209.50" font-size="40.70" textLength="87.71" lengthAdjust="spacingAndGlyphs" fill="#333333">Data</text>
<text x="1232.59" y="209.50" font-size="40.70" textLength="128.31" lengthAdjust="spacingAndGlyphs" fill="#333333">Review</text>
<text x="1425.22" y="209.50" font-size="40.70" textLength="86.88" lengthAdjust="spacingAndGlyphs" fill="#333333">View</text>
<text x="1574.96" y="209.50" font-size="40.70" textLength="88.65" lengthAdjust="spacingAndGlyphs" fill="#333333">Help</text>
<text x="208.83" y="209.50" font-size="40.70" textLength="119.46" lengthAdjust="spacingAndGlyphs" fill="#262626" stroke="#262626" stroke-width="1.14" stroke-linejoin="round">Home</text>
<text x="2732.70" y="207.00" font-size="39.24" textLength="209.87" lengthAdjust="spacingAndGlyphs" fill="#262626" stroke="#262626" stroke-width="1.18" stroke-linejoin="round">Comments</text>
<text x="3076.37" y="207.00" font-size="39.24" textLength="107.31" lengthAdjust="spacingAndGlyphs" fill="#ffffff" stroke="#ffffff" stroke-width="1.18" stroke-linejoin="round">Share</text>
<text x="80.92" y="540.40" font-size="32.56" textLength="83.14" lengthAdjust="spacingAndGlyphs" fill="#444">Undo</text>
<text x="272.65" y="538.50" font-size="32.56" textLength="147.37" lengthAdjust="spacingAndGlyphs" fill="#444">Clipboard</text>
<text x="844.02" y="538.50" font-size="32.56" textLength="67.83" lengthAdjust="spacingAndGlyphs" fill="#444">Font</text>
<text x="1492.23" y="538.50" font-size="32.56" textLength="153.02" lengthAdjust="spacingAndGlyphs" fill="#444">Alignment</text>
<text x="1989.44" y="538.60" font-size="32.56" textLength="124.04" lengthAdjust="spacingAndGlyphs" fill="#444">Number</text>
<text x="2369.90" y="540.40" font-size="32.56" textLength="69.83" lengthAdjust="spacingAndGlyphs" fill="#444">Cells</text>
<text x="2668.31" y="540.40" font-size="32.56" textLength="103.98" lengthAdjust="spacingAndGlyphs" fill="#444">Editing</text>
<text x="2915.44" y="540.40" font-size="32.56" textLength="119.02" lengthAdjust="spacingAndGlyphs" fill="#444">Analysis</text>
<text x="261.06" y="414.10" font-size="37.36" textLength="88.48" lengthAdjust="spacingAndGlyphs" fill="#b4b4b4">Paste</text>
<text x="562.99" y="331.00" font-size="37.79" textLength="106.75" lengthAdjust="spacingAndGlyphs" fill="#333333">Calibri</text>
<text x="959.80" y="331.00" font-size="37.79" textLength="37.97" lengthAdjust="spacingAndGlyphs" fill="#333333">11</text>
<text x="581.89" y="429.60" font-size="41.72" textLength="27.12" lengthAdjust="spacingAndGlyphs" fill="#3b3b3b" font-weight="700">B</text>
<text x="669.12" y="429.60" font-size="43.83" textLength="18.33" lengthAdjust="spacingAndGlyphs" fill="#3b3b3b" font-style="italic" font-family="'Liberation Serif',serif">I</text>
<text x="744.91" y="428.60" font-size="40.26" textLength="30.78" lengthAdjust="spacingAndGlyphs" fill="#3b3b3b">U</text>
<text x="1110.69" y="332.30" font-size="59.59" textLength="36.01" lengthAdjust="spacingAndGlyphs" fill="#3a3a3a" stroke="#fff" stroke-width="1.90" stroke-linejoin="round">A</text>
<text x="1198.72" y="332.30" font-size="46.08" textLength="28.77" lengthAdjust="spacingAndGlyphs" fill="#3a3a3a" stroke="#fff" stroke-width="1.30" stroke-linejoin="round">A</text>
<text x="1154.91" y="428.80" font-size="49.71" textLength="30.18" lengthAdjust="spacingAndGlyphs" fill="#3a3a3a" stroke="#fff" stroke-width="1.40" stroke-linejoin="round">A</text>
<text x="1940.59" y="304.80" font-size="37.79" textLength="127.71" lengthAdjust="spacingAndGlyphs" fill="#333333">General</text>
<text x="2351.79" y="304.80" font-size="37.79" textLength="95.09" lengthAdjust="spacingAndGlyphs" fill="#333333">Insert</text>
<text x="2352.93" y="388.40" font-size="37.79" textLength="108.24" lengthAdjust="spacingAndGlyphs" fill="#333333">Delete</text>
<text x="2352.85" y="472.00" font-size="37.79" textLength="121.43" lengthAdjust="spacingAndGlyphs" fill="#333333">Format</text>
<text x="2910.53" y="410.10" font-size="36.92" textLength="130.91" lengthAdjust="spacingAndGlyphs" fill="#333333">Analyze</text>
<text x="2933.65" y="461.50" font-size="36.92" textLength="78.65" lengthAdjust="spacingAndGlyphs" fill="#333333">Data</text>
<text x="38.12" y="638.10" font-size="42.15" textLength="50.39" lengthAdjust="spacingAndGlyphs" fill="#262626">A1</text>
<text x="169.67" y="729.50" font-size="40.70" textLength="26.33" lengthAdjust="spacingAndGlyphs" fill="#217346">A</text>
<text x="373.82" y="729.50" font-size="40.70" textLength="26.33" lengthAdjust="spacingAndGlyphs" fill="#444">B</text>
<text x="577.79" y="729.50" font-size="40.70" textLength="28.51" lengthAdjust="spacingAndGlyphs" fill="#444">C</text>
<text x="782.10" y="729.50" font-size="40.70" textLength="28.51" lengthAdjust="spacingAndGlyphs" fill="#444">D</text>
<text x="987.82" y="729.50" font-size="40.70" textLength="26.33" lengthAdjust="spacingAndGlyphs" fill="#444">E</text>
<text x="1193.60" y="729.50" font-size="40.70" textLength="24.11" lengthAdjust="spacingAndGlyphs" fill="#444">F</text>
<text x="1396.34" y="729.50" font-size="40.70" textLength="30.71" lengthAdjust="spacingAndGlyphs" fill="#444">G</text>
<text x="1601.68" y="729.50" font-size="40.70" textLength="28.51" lengthAdjust="spacingAndGlyphs" fill="#444">H</text>
<text x="1815.19" y="729.50" font-size="40.70" textLength="10.97" lengthAdjust="spacingAndGlyphs" fill="#444">I</text>
<text x="2016.69" y="729.50" font-size="40.70" textLength="19.74" lengthAdjust="spacingAndGlyphs" fill="#444">J</text>
<text x="2215.57" y="729.50" font-size="40.70" textLength="26.33" lengthAdjust="spacingAndGlyphs" fill="#444">K</text>
<text x="2422.92" y="729.50" font-size="40.70" textLength="21.96" lengthAdjust="spacingAndGlyphs" fill="#444">L</text>
<text x="2623.15" y="729.50" font-size="40.70" textLength="32.88" lengthAdjust="spacingAndGlyphs" fill="#444">M</text>
<text x="2830.06" y="729.50" font-size="40.70" textLength="28.51" lengthAdjust="spacingAndGlyphs" fill="#444">N</text>
<text x="3033.71" y="729.50" font-size="40.70" textLength="30.71" lengthAdjust="spacingAndGlyphs" fill="#444">O</text>
<text x="28.50" y="788.90" font-size="40.70" textLength="18.11" lengthAdjust="spacingAndGlyphs" fill="#217346">1</text>
<text x="26.68" y="850.75" font-size="40.70" textLength="22.63" lengthAdjust="spacingAndGlyphs" fill="#444">2</text>
<text x="26.80" y="912.60" font-size="40.70" textLength="22.63" lengthAdjust="spacingAndGlyphs" fill="#444">3</text>
<text x="26.81" y="974.45" font-size="40.70" textLength="22.63" lengthAdjust="spacingAndGlyphs" fill="#444">4</text>
<text x="26.72" y="1036.30" font-size="40.70" textLength="22.63" lengthAdjust="spacingAndGlyphs" fill="#444">5</text>
<text x="26.54" y="1098.15" font-size="40.70" textLength="22.63" lengthAdjust="spacingAndGlyphs" fill="#444">6</text>
<text x="26.66" y="1160.00" font-size="40.70" textLength="22.63" lengthAdjust="spacingAndGlyphs" fill="#444">7</text>
<text x="26.68" y="1221.85" font-size="40.70" textLength="22.63" lengthAdjust="spacingAndGlyphs" fill="#444">8</text>
<text x="26.69" y="1283.70" font-size="40.70" textLength="22.63" lengthAdjust="spacingAndGlyphs" fill="#444">9</text>
<text x="14.61" y="1345.55" font-size="40.70" textLength="45.27" lengthAdjust="spacingAndGlyphs" fill="#444">10</text>
<text x="14.81" y="1407.40" font-size="40.70" textLength="45.27" lengthAdjust="spacingAndGlyphs" fill="#444">11</text>
<text x="14.84" y="1469.25" font-size="40.70" textLength="45.27" lengthAdjust="spacingAndGlyphs" fill="#444">12</text>
<text x="14.71" y="1531.10" font-size="40.70" textLength="45.27" lengthAdjust="spacingAndGlyphs" fill="#444">13</text>
<text x="14.41" y="1592.95" font-size="40.70" textLength="45.27" lengthAdjust="spacingAndGlyphs" fill="#444">14</text>
<text x="14.67" y="1654.80" font-size="40.70" textLength="45.27" lengthAdjust="spacingAndGlyphs" fill="#444">15</text>
<text x="14.71" y="1716.65" font-size="40.70" textLength="45.27" lengthAdjust="spacingAndGlyphs" fill="#444">16</text>
<text x="14.84" y="1778.50" font-size="40.70" textLength="45.27" lengthAdjust="spacingAndGlyphs" fill="#444">17</text>
<text x="14.70" y="1840.35" font-size="40.70" textLength="45.27" lengthAdjust="spacingAndGlyphs" fill="#444">18</text>
<text x="14.78" y="1902.20" font-size="40.70" textLength="45.27" lengthAdjust="spacingAndGlyphs" fill="#444">19</text>
<text x="15.14" y="1964.05" font-size="40.70" textLength="45.27" lengthAdjust="spacingAndGlyphs" fill="#444">20</text>
<text x="15.34" y="2025.90" font-size="40.70" textLength="45.27" lengthAdjust="spacingAndGlyphs" fill="#444">21</text>
<text x="15.37" y="2087.75" font-size="40.70" textLength="45.27" lengthAdjust="spacingAndGlyphs" fill="#444">22</text>
<text x="15.24" y="2149.60" font-size="40.70" textLength="45.27" lengthAdjust="spacingAndGlyphs" fill="#444">23</text>
<text x="14.94" y="2211.45" font-size="40.70" textLength="45.27" lengthAdjust="spacingAndGlyphs" fill="#444">24</text>
<text x="15.20" y="2273.30" font-size="40.70" textLength="45.27" lengthAdjust="spacingAndGlyphs" fill="#444">25</text>
<text x="15.24" y="2335.15" font-size="40.70" textLength="45.27" lengthAdjust="spacingAndGlyphs" fill="#444">26</text>
<text x="15.37" y="2397.00" font-size="40.70" textLength="45.27" lengthAdjust="spacingAndGlyphs" fill="#444">27</text>
<text x="273.21" y="2471.00" font-size="39.97" textLength="134.93" lengthAdjust="spacingAndGlyphs" fill="#217346" font-weight="700">Sheet1</text>
<text x="16.90" y="2546.50" font-size="32.70" textLength="91.66" lengthAdjust="spacingAndGlyphs" fill="#444">Ready</text>
<text x="225.64" y="2546.50" font-size="32.70" textLength="360.35" lengthAdjust="spacingAndGlyphs" fill="#444">Accessibility: Good to go</text>
<text x="3109.29" y="2546.40" font-size="31.98" textLength="84.28" lengthAdjust="spacingAndGlyphs" fill="#444">100%</text>
</svg>
</body></html>
